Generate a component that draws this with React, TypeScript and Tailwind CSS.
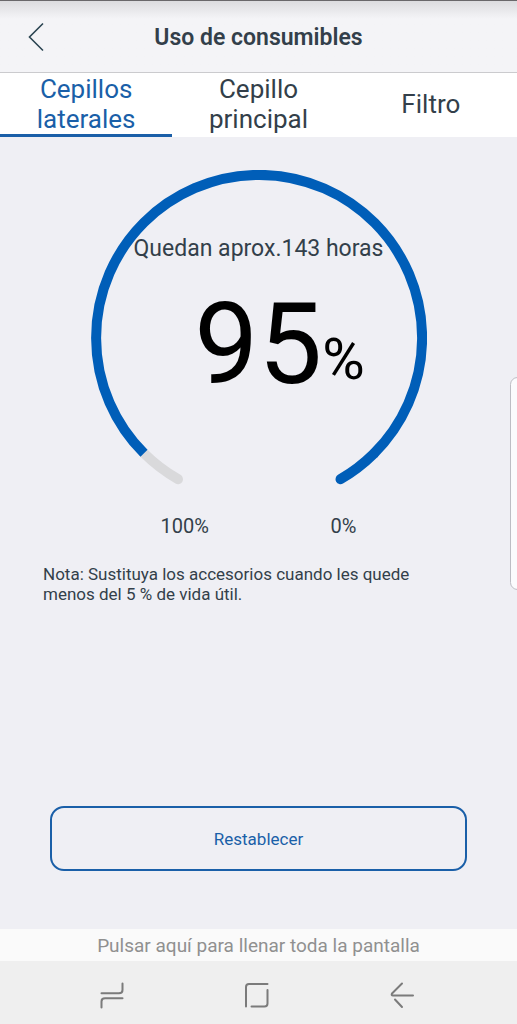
import { useState } from "react";

const tabs = ["Cepillos laterales", "Cepillo principal", "Filtro"];

function Gauge() {
  return (
    <svg viewBox="0 0 336 320" className="col-start-1 row-start-1 w-full" fill="none" strokeWidth="10" aria-hidden="true">
      <path d="M53 283.3A163 163 0 0 0 87 309.2" stroke="#d9d9db" strokeLinecap="round" />
      <path d="M53 283.3A163 163 0 1 1 282.6 283.9" stroke="#005eb8" />
      <path d="M282.6 283.9A163 163 0 0 1 249.5 309.2" stroke="#005eb8" strokeLinecap="round" />
    </svg>
  );
}

export default function App() {
  const [active, setActive] = useState(0);

  return (
    <div className="relative flex min-h-screen flex-col overflow-hidden bg-[#efeff4] font-['Roboto',sans-serif] text-[#333f4a]">
      <header className="grid h-[73px] grid-cols-[72px_1fr_72px] items-center border-t border-b border-t-[#6a686b] border-b-[#cbcbce] bg-linear-to-b from-[#dcdcdf] via-[#f4f4f7] via-25% to-[#f4f4f7]">
        <button type="button" aria-label="Atrás" className="flex h-full items-center justify-center">
          <svg width="16" height="30" viewBox="0 0 16 30" fill="none" stroke="#2b4552" strokeWidth="1.6" aria-hidden="true">
            <path d="M15 1.5L1.5 15L15 28.5" />
          </svg>
        </button>
        <h1 className="pt-0.5 text-center text-[23px] leading-7 font-semibold">Uso de consumibles</h1>
      </header>

      <nav className="grid h-16 grid-cols-3 bg-white">
        {tabs.map((tab, i) => (
          <button
            key={tab}
            type="button"
            aria-pressed={active === i}
            onClick={() => setActive(i)}
            className={
              active === i
                ? "border-b-3 border-[#1a5fa8] px-6 text-[26px] leading-[30px] text-[#1a5fa8]"
                : "border-b-3 border-transparent px-6 text-[26px] leading-[30px]"
            }
          >
            {tab}
          </button>
        ))}
      </nav>

      <main className="flex flex-1 flex-col px-[43px] pt-[33px]">
        <section className="mx-auto grid w-full max-w-[336px]">
          <Gauge />
          <div className="col-start-1 row-start-1 flex flex-col items-center pt-[63px]">
            <p className="text-[23px] leading-8 whitespace-nowrap">Quedan aprox.143 horas</p>
            <p className="flex items-end pt-6 pl-[42px] leading-none text-black">
              <span className="text-[114px] leading-[110px]">95</span>
              <span className="pb-2 text-[58px] leading-[64px]">%</span>
            </p>
          </div>
        </section>

        <div className="mx-auto flex w-full max-w-[336px] justify-between pt-6 pr-[70px] pl-[70px] text-xl leading-6">
          <span>100%</span>
          <span>0%</span>
        </div>

        <p className="max-w-[400px] pt-[26px] text-[17px] leading-5">
          Nota: Sustituya los accesorios cuando les quede menos del 5 % de vida útil.
        </p>

        <div className="mt-auto px-[7px] pb-[58px]">
          <button type="button" className="h-[65px] w-full rounded-[14px] border-2 border-[#1a5fa8] pt-0.5 text-[17px] text-[#1a5fa8]">
            Restablecer
          </button>
        </div>
      </main>

      <button type="button" className="h-8 bg-[#fafafa] pt-0.5 text-[19px] leading-[30px] text-[#909090]">
        Pulsar aquí para llenar toda la pantalla
      </button>

      <footer className="flex h-[63px] items-center justify-center gap-[117px] bg-[#efefef] pt-1 pr-1 text-[#7b7b7b]">
        <button type="button" aria-label="Recientes">
          <svg width="28" height="28" viewBox="0 0 28 28" fill="none" stroke="currentColor" strokeWidth="2" strokeLinecap="round" aria-hidden="true">
            <path d="M3.5 12.3H21Q24.5 12.3 24.5 9V2.5" />
            <path d="M24.5 17.3H7Q3.5 17.3 3.5 20.5V26.5" />
          </svg>
        </button>
        <button type="button" aria-label="Inicio">
          <svg width="28" height="28" viewBox="0 0 28 28" fill="none" stroke="currentColor" strokeWidth="2" strokeLinecap="round" aria-hidden="true">
            <path d="M3 25.5V6Q3 3 6 3H24.5" />
            <path d="M24.5 9V22.5Q24.5 25.5 21.5 25.5H8.5" />
          </svg>
        </button>
        <button type="button" aria-label="Volver">
          <svg width="28" height="28" viewBox="0 0 28 28" fill="none" stroke="currentColor" strokeWidth="2" strokeLinecap="round" strokeLinejoin="round" aria-hidden="true">
            <path d="M14 2.5L4 12.5Q3 14.5 5 14.5H25" />
            <path d="M7 18.5L14 26" />
          </svg>
        </button>
      </footer>

      <div className="absolute top-[377px] -right-2 h-[213px] w-[15px] rounded-lg border border-[#bdbdc4] bg-[#fbfbfd]" />
    </div>
  );
}
